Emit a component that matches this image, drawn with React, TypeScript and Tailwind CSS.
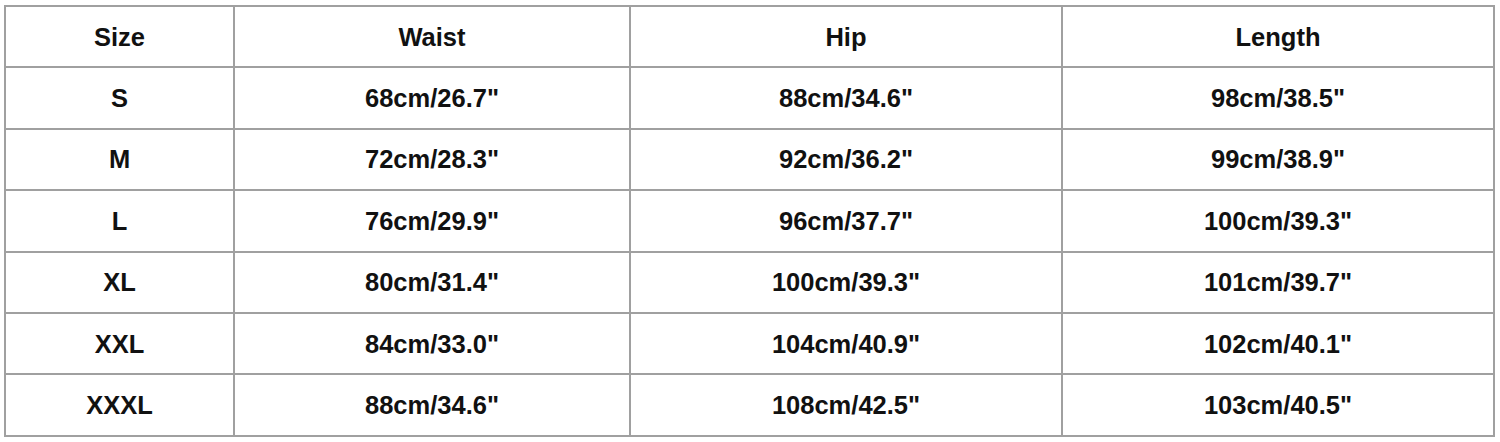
const headers = ['Size', 'Waist', 'Hip', 'Length'];

const rows = [
  ['S', '68cm/26.7"', '88cm/34.6"', '98cm/38.5"'],
  ['M', '72cm/28.3"', '92cm/36.2"', '99cm/38.9"'],
  ['L', '76cm/29.9"', '96cm/37.7"', '100cm/39.3"'],
  ['XL', '80cm/31.4"', '100cm/39.3"', '101cm/39.7"'],
  ['XXL', '84cm/33.0"', '104cm/40.9"', '102cm/40.1"'],
  ['XXXL', '88cm/34.6"', '108cm/42.5"', '103cm/40.5"'],
];

const widths = ['w-[229px]', 'w-[396px]', 'w-[432px]', 'w-[432px]'];

export default function App() {
  return (
    <div className="w-[1500px] h-[442px] bg-white pl-[4px] pt-[5px] font-['Liberation_Sans',Arial,sans-serif]">
      <table className="border-collapse table-fixed w-[1490px] border-2 border-[#a0a0a0]">
        <tbody>
          <tr className="h-[61.4px]">
            {headers.map((h, i) => (
              <td
                key={h}
                className={`${widths[i]} border-2 border-[#a0a0a0] text-center align-middle text-[25.5px] font-bold text-[#111]`}
              >
                {h}
              </td>
            ))}
          </tr>
          {rows.map((r) => (
            <tr key={r[0]} className="h-[61.4px]">
              {r.map((c, i) => (
                <td
                  key={i}
                  className={`${widths[i]} border-2 border-[#a0a0a0] text-center align-middle text-[25.5px] font-bold text-[#111]`}
                >
                  {c}
                </td>
              ))}
            </tr>
          ))}
        </tbody>
      </table>
    </div>
  );
}
